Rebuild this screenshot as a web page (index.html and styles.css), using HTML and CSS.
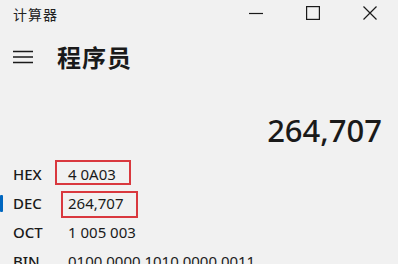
FILE: index.html
```html
<!DOCTYPE html>
<html lang="zh-CN">
<head>
<meta charset="utf-8">
<title>计算器</title>
<link rel="stylesheet" href="styles.css">
</head>
<body>
<div class="window">
  <div class="titlebar">
    <div class="app-title">计算器</div>
    <div class="controls">
      <div class="ctl"><svg width="14" height="14" viewBox="0 0 14 14"><line x1="0" y1="7.5" x2="14" y2="7.5" stroke="#1a1a1a" stroke-width="1.2"/></svg></div>
      <div class="ctl"><svg width="14" height="14" viewBox="0 0 14 14"><rect x="0.6" y="0.6" width="12.8" height="12.8" fill="none" stroke="#1a1a1a" stroke-width="1.2"/></svg></div>
      <div class="ctl"><svg width="14" height="14" viewBox="0 0 14 14"><path d="M0.5 0.5 L13.5 13.5 M13.5 0.5 L0.5 13.5" stroke="#1a1a1a" stroke-width="1.2"/></svg></div>
    </div>
  </div>
  <div class="header">
    <svg class="menu" width="20" height="14" viewBox="0 0 20 14"><path d="M0 1.5 H20 M0 7 H20 M0 12.5 H20" stroke="#1a1a1a" stroke-width="1.3"/></svg>
    <h1 class="mode">程序员</h1>
  </div>
  <div class="display">264,707</div>
  <div class="radix">
    <div class="row"><span class="label">HEX</span><span class="value">4 0A03</span></div>
    <div class="row active"><span class="label">DEC</span><span class="value">264,707</span></div>
    <div class="row"><span class="label">OCT</span><span class="value">1 005 003</span></div>
    <div class="row"><span class="label">BIN</span><span class="value">0100 0000 1010 0000 0011</span></div>
    <div class="mark mark-hex"></div>
    <div class="mark mark-dec"></div>
  </div>
</div>
</body>
</html>
```

FILE: styles.css
```css
html, body {
  margin: 0;
  padding: 0;
}
body {
  background: #f1f1f1;
  font-family: "Noto Sans", "Noto Sans CJK SC", sans-serif;
  color: #1a1a1a;
}
.window {
  width: 398px;
  height: 264px;
  overflow: hidden;
  background: #f1f1f1;
}
.titlebar {
  display: flex;
  justify-content: space-between;
  height: 32px;
}
.app-title {
  padding-left: 13px;
  padding-top: 5px;
  font-family: "Noto Sans CJK SC", sans-serif;
  font-size: 14px;
  letter-spacing: 1px;
  line-height: 18px;
  color: #222;
}
.controls {
  display: flex;
}
.ctl {
  width: 57px;
  height: 26px;
  display: flex;
  align-items: center;
  justify-content: center;
}
.header {
  display: flex;
  align-items: center;
  height: 50px;
}
.menu {
  margin-left: 13px;
  margin-right: 24px;
}
.mode {
  margin: 0;
  font-family: "Noto Sans CJK SC", sans-serif;
  font-size: 24px;
  font-weight: 700;
  line-height: 30px;
  letter-spacing: 1px;
}
.display {
  margin-top: 28px;
  text-align: right;
  padding-right: 16px;
  font-size: 31px;
  font-weight: 500;
  line-height: 40px;
}
.radix {
  position: relative;
  margin-top: 10px;
}
.row {
  display: flex;
  height: 29px;
  line-height: 29px;
  font-size: 15px;
  position: relative;
}
.row.active::before {
  content: "";
  position: absolute;
  left: 0;
  top: 6px;
  width: 3px;
  height: 17px;
  background: #0067c0;
  border-radius: 1px;
}
.label {
  width: 55px;
  padding-left: 13px;
  font-weight: 500;
}
.value {
  font-weight: 400;
}
.mark {
  position: absolute;
  border: 2px solid #d9383e;
  box-sizing: border-box;
}
.mark-hex {
  left: 55px;
  top: 0px;
  width: 76px;
  height: 25px;
}
.mark-dec {
  left: 61px;
  top: 31px;
  width: 77px;
  height: 27px;
}
```
